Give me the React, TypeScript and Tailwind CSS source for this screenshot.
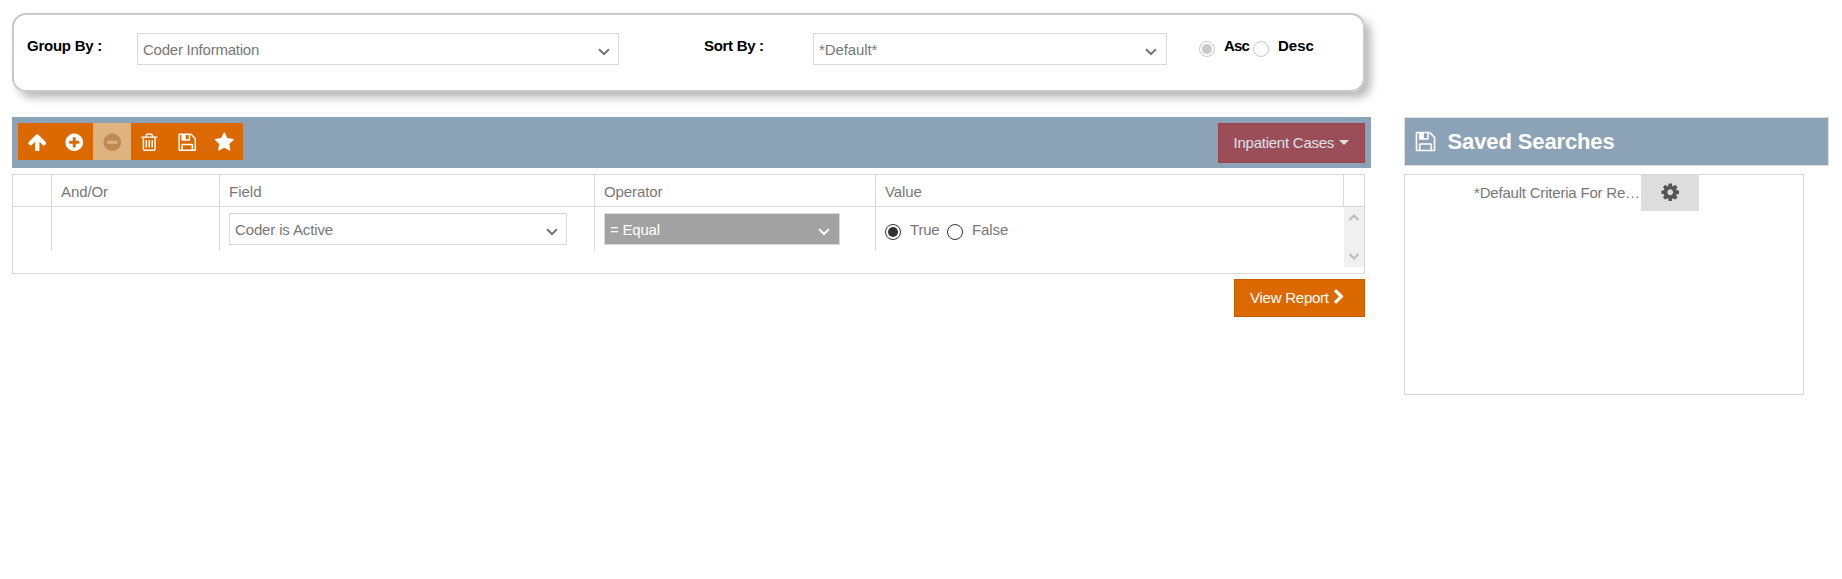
import React from "react";

const ICONS = {
  arrowUp:
    "M1675 971q0 51-37 90l-75 75q-38 38-91 38-54 0-90-38l-294-293v704q0 52-37.5 84.5t-90.5 32.5h-128q-53 0-90.5-32.5t-37.5-84.5v-704l-294 293q-36 38-90 38t-90-38l-75-75q-38-38-38-90 0-53 38-91l651-651q35-37 90-37 54 0 91 37l651 651q37 39 37 91z",
  plus:
    "M1344 960v-128q0-26-19-45t-45-19h-256v-256q0-26-19-45t-45-19h-128q-26 0-45 19t-19 45v256h-256q-26 0-45 19t-19 45v128q0 26 19 45t45 19h256v256q0 26 19 45t45 19h128q26 0 45-19t19-45v-256h256q26 0 45-19t19-45zm320-64q0 209-103 385.5t-279.5 279.5-385.5 103-385.5-103-279.5-279.5-103-385.5 103-385.5 279.5-279.5 385.5-103 385.5 103 279.5 279.5 103 385.5z",
  minus:
    "M1344 960v-128q0-26-19-45t-45-19h-768q-26 0-45 19t-19 45v128q0 26 19 45t45 19h768q26 0 45-19t19-45zm320-64q0 209-103 385.5t-279.5 279.5-385.5 103-385.5-103-279.5-279.5-103-385.5 103-385.5 279.5-279.5 385.5-103 385.5 103 279.5 279.5 103 385.5z",
  trash:
    "M704 736v576q0 14-9 23t-23 9h-64q-14 0-23-9t-9-23v-576q0-14 9-23t23-9h64q14 0 23 9t9 23zm256 0v576q0 14-9 23t-23 9h-64q-14 0-23-9t-9-23v-576q0-14 9-23t23-9h64q14 0 23 9t9 23zm256 0v576q0 14-9 23t-23 9h-64q-14 0-23-9t-9-23v-576q0-14 9-23t23-9h64q14 0 23 9t9 23zm128 724v-948h-896v948q0 22 7 40.5t14.5 27 10.5 8.5h832q3 0 10.5-8.5t14.5-27 7-40.5zm-672-1076h448l-48-117q-7-9-17-11h-317q-10 2-17 11zm928 32v64q0 14-9 23t-23 9h-96v948q0 83-47 143.5t-113 60.5h-832q-66 0-113-58.5t-47-141.5v-952h-96q-14 0-23-9t-9-23v-64q0-14 9-23t23-9h309l70-167q15-37 54-63t79-26h320q40 0 79 26t54 63l70 167h309q14 0 23 9t9 23z",
  save:
    "M512 1536h768v-384h-768v384zm896 0h128v-896q0-14-10-38.5t-20-34.5l-281-281q-10-10-34-20t-39-10v416q0 40-28 68t-68 28h-576q-40 0-68-28t-28-68v-416h-128v1280h128v-416q0-40 28-68t68-28h832q40 0 68 28t28 68v416zm-384-928v-320q0-13-9.5-22.5t-22.5-9.5h-192q-13 0-22.5 9.5t-9.5 22.5v320q0 13 9.5 22.5t22.5 9.5h192q13 0 22.5-9.5t9.5-22.5zm640 32v928q0 40-28 68t-68 28h-1344q-40 0-68-28t-28-68v-1344q0-40 28-68t68-28h928q40 0 88 20t76 48l280 280q28 28 48 76t20 88z",
  star:
    "M1728 647q0 22-26 48l-363 354 86 500q1 7 1 20 0 21-10.5 35.5t-30.5 14.5q-19 0-40-12l-449-236-449 236q-22 12-40 12-21 0-31.5-14.5t-10.5-35.5q0-6 2-20l86-500-364-354q-25-27-25-48 0-37 56-46l502-73 225-455q19-41 49-41t49 41l225 455 502 73q56 9 56 46z",
  cog:
    "M1152 896q0-106-75-181t-181-75-181 75-75 181 75 181 181 75 181-75 75-181zm512-109v222q0 12-8 23t-20 13l-185 28q-19 54-39 91 35 50 107 138 10 12 10 25t-9 23q-27 37-99 108t-94 71q-12 0-26-9l-138-108q-44 23-91 38-16 136-29 186-7 28-36 28h-222q-14 0-24.5-8.5t-11.5-21.5l-28-184q-49-16-90-37l-141 107q-10 9-25 9-14 0-25-11-126-114-165-168-7-10-7-23 0-12 8-23 15-21 51-66.5t54-70.5q-27-50-41-99l-183-27q-13-2-21-12.5t-8-23.5v-222q0-12 8-23t19-13l186-28q14-46 39-92-40-57-107-138-10-12-10-24 0-10 9-23 26-36 98.5-107.5t94.5-71.5q13 0 26 10l138 107q44-23 91-38 16-136 29-186 7-28 36-28h222q14 0 24.5 8.5t11.5 21.5l28 184q49 16 90 37l142-107q9-9 24-9 13 0 25 10 129 119 165 170 7 8 7 22 0 12-8 23-15 21-51 66.5t-54 70.5q26 50 41 98l183 28q13 2 21 12.5t8 23.5z",
  chevron:
    "M1363 877l-742 742q-19 19-45 19t-45-19l-166-166q-19-19-19-45t19-45l531-531-531-531q-19-19-19-45t19-45l166-166q19-19 45-19t45 19l742 742q19 19 19 45t-19 45z",
};

function Icon({ name, className }: { name: keyof typeof ICONS; className: string }) {
  return (
    <svg viewBox="0 0 1792 1792" fill="currentColor" className={`shrink-0 ${className}`}>
      <path d={ICONS[name]} />
    </svg>
  );
}

function Select({ label, className }: { label: string; className: string }) {
  return (
    <div
      className={`flex h-8 shrink-0 items-center justify-between border border-[#d9d9d9] pl-[5px] ${className}`}
    >
      <span className="leading-[17px]">{label}</span>
      <svg viewBox="0 0 12 8" className="mt-[5px] h-2 w-3" fill="none" stroke="currentColor" strokeWidth="2">
        <path d="M1 1.2 L6 6 L11 1.2" />
      </svg>
    </div>
  );
}

function Radio({ checked, disabled }: { checked?: boolean; disabled?: boolean }) {
  return (
    <span
      className={`flex size-4 shrink-0 items-center justify-center rounded-full border ${
        disabled ? "border-[#c9c9c9]" : "border-[#333]"
      }`}
    >
      {checked && <span className={`size-2.5 rounded-full ${disabled ? "bg-[#c9c9c9]" : "bg-[#333]"}`} />}
    </span>
  );
}

function SortPanel() {
  return (
    <section className="flex h-[79px] w-[1353px] items-start rounded-[14px] border-2 border-[#c9c9c9] pt-[18px] pl-[13px] font-bold text-black shadow-[6px_6px_8px_#bbb]">
      <span className="w-[110px] pt-1 leading-[17px] tracking-[-0.24px]">Group By :</span>
      <Select label="Coder Information" className="w-[482px] pr-2 font-normal tracking-[-0.24px] text-[#777]" />
      <span className="ml-[85px] w-[109px] pt-1 leading-[17px] tracking-[-0.3px]">Sort By :</span>
      <Select label="*Default*" className="w-[354px] pr-[9px] font-normal tracking-[-0.1px] text-[#777]" />
      <div className="ml-8 flex pt-2">
        <Radio checked disabled />
        <span className="mt-[-4px] ml-[9px] w-[29px] leading-[17px] tracking-[-0.8px]">Asc</span>
        <Radio disabled />
        <span className="mt-[-4px] ml-[9px] leading-[17px]">Desc</span>
      </div>
    </section>
  );
}

function Toolbar() {
  const actions: { name: keyof typeof ICONS; disabled?: boolean }[] = [
    { name: "arrowUp" },
    { name: "plus" },
    { name: "minus", disabled: true },
    { name: "trash" },
    { name: "save" },
    { name: "star" },
  ];
  return (
    <div className="mt-[25px] flex h-[51px] w-[1359px] items-start justify-between bg-[#8ca2b7] p-1.5">
      <div className="flex h-[37px] w-[225px] text-white">
        {actions.map((a) => (
          <button
            key={a.name}
            className={`flex flex-1 items-center justify-center pt-px ${
              a.disabled ? "bg-[#deb380] text-[#c18a55]" : "bg-[#dc6900]"
            }`}
          >
            <Icon name={a.name} className="size-[20.5px]" />
          </button>
        ))}
      </div>
      <button className="flex h-10 w-[147px] items-center border border-[#964652] bg-[#9b4e58] pl-[14.5px] text-[#dde2e8]">
        <span className="mt-[-2px] leading-[17px] tracking-[-0.24px]">Inpatient Cases</span>
        <span className="mt-[-2px] ml-[5px] border-x-5 border-t-5 border-x-transparent" />
      </button>
    </div>
  );
}

function CriteriaTable() {
  return (
    <div className="mt-1.5 h-[100px] w-[1353px] border border-[#d9d9d9]">
      <div className="grid h-8 grid-cols-[39px_168px_375px_281px_468px_20px] border-b border-[#d9d9d9] leading-[31px]">
        <div className="border-r border-[#d9d9d9]" />
        <div className="border-r border-[#d9d9d9] pt-px pl-[9px] tracking-[-0.1px]">And/Or</div>
        <div className="border-r border-[#d9d9d9] pt-px pl-[9px]">Field</div>
        <div className="border-r border-[#d9d9d9] pt-px pl-[9px] tracking-[-0.1px]">Operator</div>
        <div className="border-r border-[#d9d9d9] pt-px pl-[9px] tracking-[-0.1px]">Value</div>
      </div>
      <div className="grid grid-cols-[39px_168px_375px_281px_468px_20px] items-start">
        <div className="h-11 border-r border-[#d9d9d9]" />
        <div className="h-11 border-r border-[#d9d9d9]" />
        <div className="h-11 border-r border-[#d9d9d9] pt-1.5 pl-[9px]">
          <Select label="Coder is Active" className="w-[338px] pr-2 tracking-[-0.14px]" />
        </div>
        <div className="h-11 border-r border-[#d9d9d9] pt-1.5 pl-[9px]">
          <Select label="= Equal" className="w-[236px] bg-[#a2a2a2] pr-[9px] tracking-[-0.2px] text-white" />
        </div>
        <div className="flex pt-[17px] pl-[9px]">
          <Radio checked />
          <span className="mt-[-3px] ml-[9px] w-[37px] leading-[17px] tracking-[-0.2px]">True</span>
          <Radio />
          <span className="mt-[-3px] ml-[9px] leading-[17px] tracking-[-0.1px]">False</span>
        </div>
        <div className="flex h-[60px] flex-col items-center justify-between bg-[#f0f0f0] py-[7px] text-[#bdbdbd]">
          <svg viewBox="0 0 10 7" className="h-[7px] w-2.5" fill="none" stroke="currentColor" strokeWidth="2">
            <path d="M.5 6 L5 1.5 L9.5 6" />
          </svg>
          <svg viewBox="0 0 10 7" className="h-[7px] w-2.5" fill="none" stroke="currentColor" strokeWidth="2">
            <path d="M.5 1 L5 5.5 L9.5 1" />
          </svg>
        </div>
      </div>
    </div>
  );
}

function SavedSearches() {
  return (
    <aside className="mt-[104px] ml-[33px] w-[425px]">
      <h2 className="flex h-[49px] items-center border border-[#dddddd] bg-[#8ca2b7] pl-[9px] text-[22px] font-bold text-white">
        <Icon name="save" className="size-[23px]" />
        <span className="ml-[10.5px] leading-6 tracking-[-0.12px]">Saved Searches</span>
      </h2>
      <div className="mt-2 flex h-[221px] w-[400px] items-start border border-[#d9d9d9]">
        <span className="w-[236px] shrink-0 pt-[9px] pl-[69px] leading-[17px] tracking-[-0.2px] whitespace-nowrap">
          *Default Criteria For Re…
        </span>
        <button className="flex h-9 w-[58px] items-center justify-center bg-[#ddd] pb-[2px] text-[#555]">
          <Icon name="cog" className="size-[20.5px]" />
        </button>
      </div>
    </aside>
  );
}

export default function App() {
  return (
    <main className="flex min-h-[579px] w-[1842px] items-start bg-white pt-[13px] pl-3 font-['Liberation_Sans',Arial,sans-serif] text-[15px] text-[#777]">
      <div className="w-[1359px]">
        <SortPanel />
        <Toolbar />
        <CriteriaTable />
        <div className="mt-[5px] flex w-[1353px] justify-end">
          <button className="flex h-[38px] w-[131px] items-center border border-[#c35d00] bg-[#dc6900] pl-[15px] text-white">
            <span className="mt-[-2px] leading-[17px] tracking-[-0.24px]">View Report</span>
            <Icon name="chevron" className="mt-[-2px] ml-[2px] size-[16px]" />
          </button>
        </div>
      </div>
      <SavedSearches />
    </main>
  );
}
